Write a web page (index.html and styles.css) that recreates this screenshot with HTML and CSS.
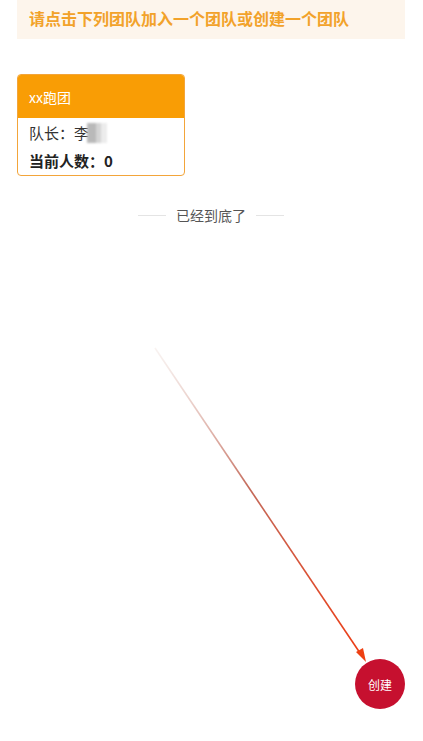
FILE: index.html
```html
<!DOCTYPE html>
<html lang="zh">
<head>
<meta charset="utf-8">
<link rel="stylesheet" href="styles.css">
</head>
<body>
<div class="page">
  <div class="banner">请点击下列团队加入一个团队或创建一个团队</div>
  <div class="card">
    <div class="card-head">xx跑团</div>
    <div class="card-body">
      <div class="row">队长：李<span class="blur"></span></div>
      <div class="row bold">当前人数：0</div>
    </div>
  </div>
  <div class="end"><span class="line"></span><span class="end-text">已经到底了</span><span class="line"></span></div>
</div>
<svg class="arrow" width="423" height="741" viewBox="0 0 423 741">
  <defs>
    <linearGradient id="g" x1="155" y1="348" x2="364" y2="660" gradientUnits="userSpaceOnUse">
      <stop offset="0" stop-color="#e9d6d0" stop-opacity="0.3"/>
      <stop offset="0.45" stop-color="#c46a5a"/>
      <stop offset="1" stop-color="#ee3a12"/>
    </linearGradient>
  </defs>
  <line x1="155" y1="348" x2="360" y2="653" stroke="url(#g)" stroke-width="1.6"/>
  <polygon points="366,662 356,652 363,648" fill="#ee4012"/>
</svg>
<div class="fab">创建</div>
</body>
</html>
```
FILE: styles.css
```css
html, body {
  margin: 0;
  padding: 0;
  background: #fff;
}
body {
  font-family: "Noto Sans CJK SC", "Liberation Sans", sans-serif;
  width: 423px;
  height: 741px;
  position: relative;
  overflow: hidden;
}
.page {
  padding: 0 18px 0 17px;
}
.banner {
  height: 39px;
  background: #fdf5ec;
  color: #f2a22a;
  font-weight: bold;
  font-size: 16px;
  line-height: 36px;
  padding-left: 12px;
}
.card {
  margin-top: 35px;
  width: 168px;
  border: 1px solid #f3a53a;
  border-radius: 4px;
  overflow: hidden;
  box-sizing: border-box;
}
.card-head {
  background: #f99d05;
  color: #fff;
  font-size: 14px;
  height: 43px;
  line-height: 45px;
  padding-left: 11px;
}
.card-body {
  padding: 1px 11px 0;
}
.row {
  font-size: 15px;
  color: #333;
  line-height: 28px;
  display: flex;
  align-items: center;
}
.row.bold {
  font-weight: bold;
  color: #222;
}
.blur {
  display: inline-block;
  width: 20px;
  height: 20px;
  margin-left: -2px;
  background: linear-gradient(90deg, #b9b9b9 0 45%, #d4d4d4 45% 70%, #ececec 70%);
  filter: blur(1.2px);
}
.end {
  margin-top: 29px;
  display: flex;
  justify-content: center;
  align-items: center;
  gap: 10px;
}
.line {
  width: 28px;
  height: 1px;
  background: #e4e4e4;
}
.end-text {
  font-size: 14px;
  color: #555;
}
.arrow {
  position: absolute;
  left: 0;
  top: 0;
}
.fab {
  position: absolute;
  left: 355px;
  top: 659px;
  width: 50px;
  height: 50px;
  border-radius: 50%;
  background: #c6102f;
  color: #fff;
  font-size: 12px;
  display: flex;
  align-items: center;
  justify-content: center;
}
```
